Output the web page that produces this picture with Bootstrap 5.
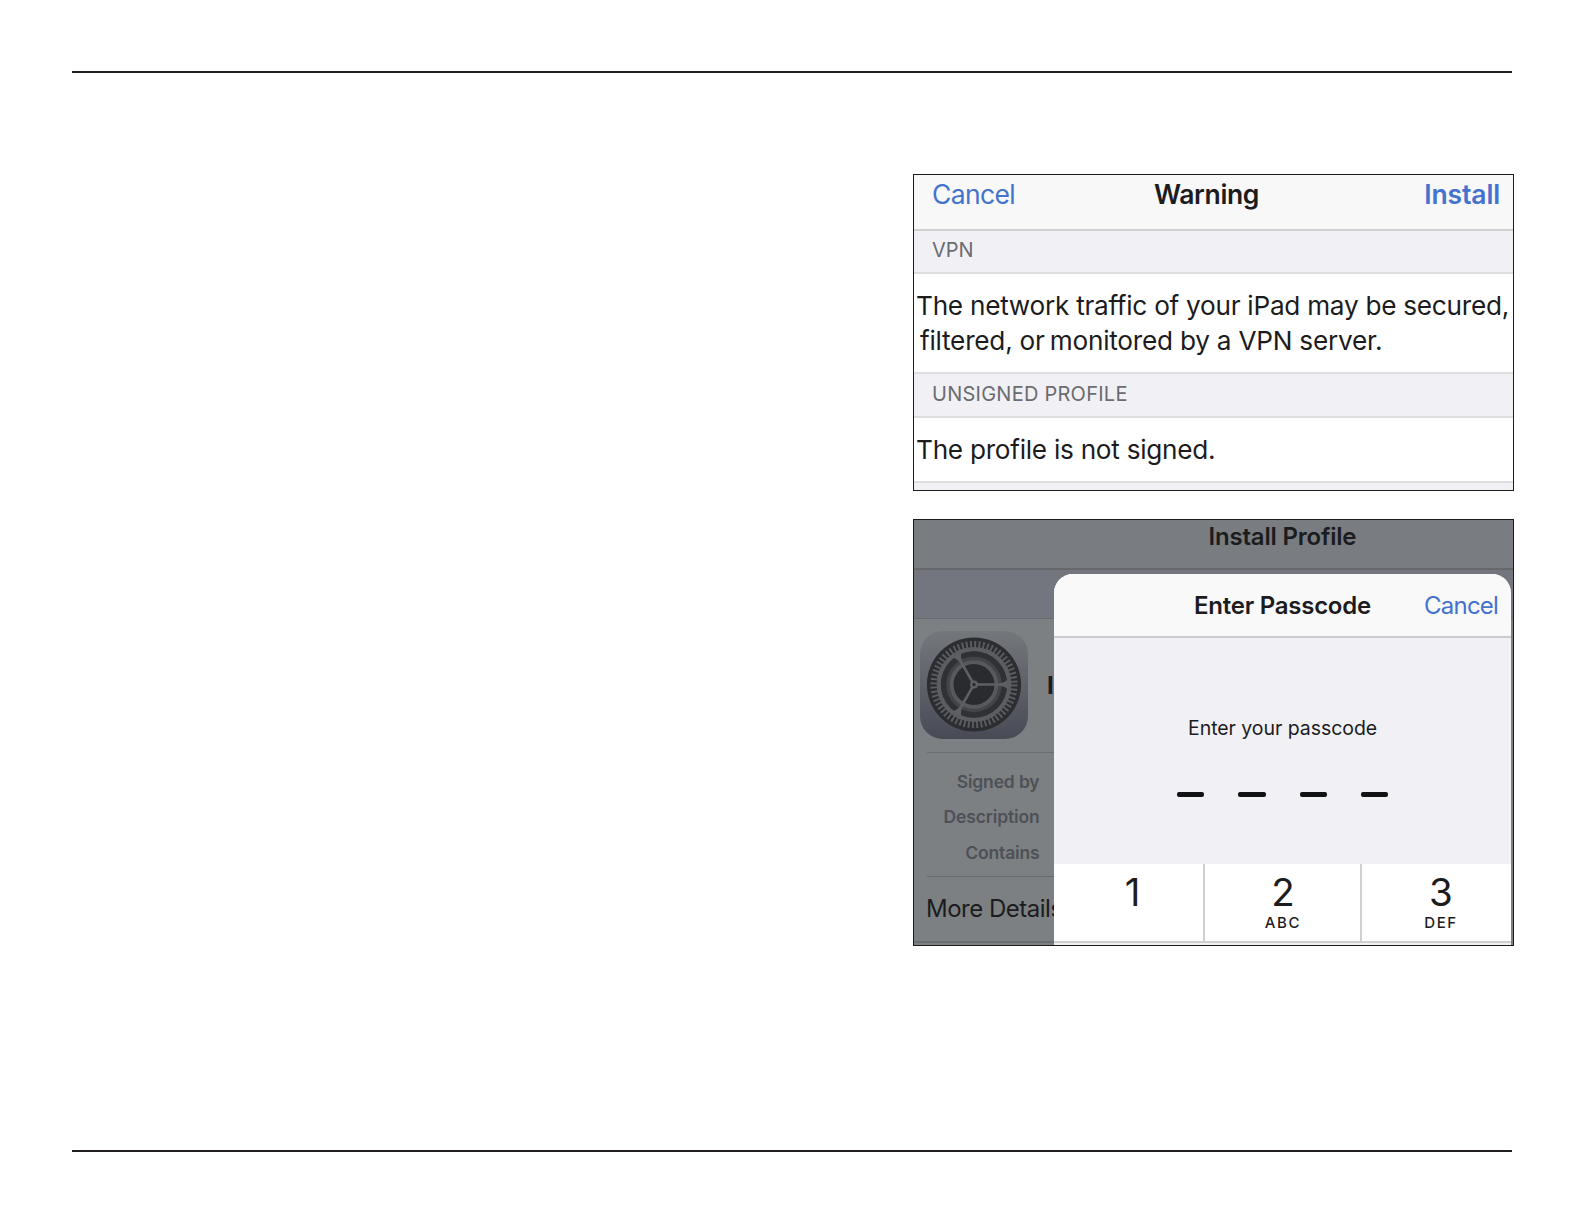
<!DOCTYPE html>
<html lang="en">
<head>
    <meta charset="UTF-8">
    <meta name="viewport" content="width=device-width, initial-scale=1.0">
    <title>Install Profile</title>

    <link href="https://cdn.jsdelivr.net/npm/bootstrap@5.3.3/dist/css/bootstrap.min.css" rel="stylesheet">
    <style>
        body {
            font-family: Inter, "Liberation Sans", sans-serif;
            color: #1c1c1e;
            background: #fff;
        }
        .page {
            width: 1584px;
            height: 1224px;
            padding: 71px 70px 72px 72px;
        }
        .rule {
            width: 1440px;
            height: 2px;
            background: #231f20;
            flex: none;
        }
        .shots {
            width: 601px;
            margin-top: 101px;
            gap: 28px;
        }
        .shot {
            border: 1px solid #1c1c1c;
            overflow: hidden;
        }
        .link-blue {
            color: #4472cd;
            text-decoration: none;
        }

        /* warning sheet */
        .warning {
            height: 317px;
            background: #f1f1f5;
        }
        .warning-bar {
            height: 56px;
            padding: 0 13px 0 18px;
            line-height: 39px;
            font-size: 26.5px;
            letter-spacing: -0.35px;
            background: #f8f8f8;
            border-bottom: 2px solid #cfcfd1;
        }
        .warning-cancel {
            width: 222px;
            letter-spacing: -0.65px;
        }
        .warning-install {
            letter-spacing: -0.15px;
        }
        .section-label {
            height: 43px;
            padding-left: 18px;
            font-size: 20px;
            line-height: 38px;
            color: #6b6b70;
            border-bottom: 2px solid #dedee1;
        }
        .unsigned-label {
            height: 44px;
            line-height: 41px;
            letter-spacing: 0.25px;
        }
        .section-text {
            padding: 14px 0 0 2px;
            font-size: 26.2px;
            line-height: 35px;
            letter-spacing: -0.27px;
            background: #fff;
            border-bottom: 2px solid #dedee1;
            white-space: nowrap;
        }
        .vpn-text {
            height: 100px;
        }
        .unsigned-text {
            height: 65px;
        }
        .hang {
            padding-left: 4px;
            letter-spacing: -0.24px;
        }
        .tight {
            word-spacing: -2px;
        }

        /* passcode sheet */
        .passcode {
            height: 427px;
            background: #7c8082;
        }
        .dim-bar {
            height: 50px;
            padding-left: 294.5px;
            font-size: 24px;
            line-height: 33px;
            letter-spacing: -0.2px;
            background: #797c80;
            border-bottom: 2px solid #66686c;
        }
        .dim-gap {
            height: 49px;
            background: #73767e;
            border-bottom: 1px solid #686b72;
        }
        .behind {
            width: 150px;
        }
        .profile-row {
            height: 133px;
            padding: 12px 0 0 6px;
        }
        .gear {
            width: 108px;
            height: 108px;
            flex: none;
        }
        .profile-name {
            padding: 37px 0 0 19px;
            font-size: 24px;
            line-height: 36px;
        }
        .facts {
            margin-left: 13px;
            width: 137px;
            height: 125px;
            padding: 11px 24.5px 0 0;
            font-size: 17.5px;
            line-height: 35.4px;
            letter-spacing: -0.15px;
            color: #4d5057;
            border-top: 1px solid #6b6e71;
            border-bottom: 1px solid #666a6d;
        }
        .more {
            height: 66px;
            padding: 12px 0 0 12px;
            font-size: 24px;
            line-height: 39px;
            letter-spacing: -0.5px;
            border-bottom: 2px solid #6c6f72;
            white-space: nowrap;
        }
        .sheet {
            position: absolute;
            left: 140px;
            top: 54px;
            width: 457px;
            height: 372px;
            background: #f1f1f5;
            border-radius: 19px 19px 0 0;
            overflow: hidden;
        }
        .sheet-bar {
            height: 64px;
            padding: 0 13px 0 140px;
            font-size: 24px;
            line-height: 64px;
            letter-spacing: -0.25px;
            background: #f9f9fa;
            border-bottom: 2px solid #ccccce;
        }
        .sheet-cancel {
            letter-spacing: -0.8px;
        }
        .prompt {
            height: 153px;
            padding: 72px 0 0 134px;
            font-size: 19.5px;
            line-height: 36px;
            letter-spacing: -0.05px;
        }
        .dashes {
            height: 73px;
            padding: 0.5px 0 0 123px;
            gap: 34px;
        }
        .dashes span {
            width: 27.3px;
            height: 5.5px;
            border-radius: 2px;
            background: #111214;
        }
        .keys {
            height: 79px;
            background: #fff;
            border-bottom: 2px solid #cfcfcf;
        }
        .key {
            border-right: 2px solid #d0d0d0;
            padding-top: 3px;
        }
        .key:last-child {
            border-right: 0;
        }
        .key-digit {
            font-size: 38.5px;
            line-height: 50px;
        }
        .key-letters {
            font-size: 15px;
            line-height: 15px;
            letter-spacing: 1.6px;
            margin-top: -2px;
            font-weight: 500;
        }
        .key-one { width: 151px; padding-left: 8px; }
        .key-two { width: 157px; padding-left: 1px; }
        .key-three { width: 149px; padding-left: 9px; }
    </style>
</head>
<body>

    <div class="page d-flex flex-column">
        <div class="rule"></div>

        <div class="shots d-flex flex-column ms-auto">

            <div class="shot warning">
                <div class="warning-bar d-flex">
                    <a href="#" class="link-blue warning-cancel">Cancel</a>
                    <span class="fw-semibold">Warning</span>
                    <a href="#" class="link-blue warning-install fw-semibold ms-auto">Install</a>
                </div>
                <div class="section-label">VPN</div>
                <div class="section-text vpn-text">
                    <div>The network traffic of your iPad may be secured,</div>
                    <div class="hang">filtered, <span class="tight">or </span>monitored by a VPN server.</div>
                </div>
                <div class="section-label unsigned-label">UNSIGNED PROFILE</div>
                <div class="section-text unsigned-text">The profile is not signed.</div>
            </div>

            <div class="shot passcode position-relative">
                <div class="dim-bar fw-semibold">Install Profile</div>
                <div class="dim-gap"></div>
                <div class="behind">
                    <div class="profile-row d-flex align-items-start">
                        <svg class="gear" viewBox="0 0 109 109">
                            <defs>
                                <linearGradient id="tile" x1="0" y1="0" x2="0" y2="1">
                                    <stop offset="0" stop-color="#74777b"/>
                                    <stop offset="1" stop-color="#484b55"/>
                                </linearGradient>
                            </defs>
                            <rect width="109" height="109" rx="23" fill="url(#tile)"/>
                            <circle cx="54.5" cy="54" r="47.5" fill="#2b2d30"/>
                            <!-- toothed ring -->
                            <circle cx="54.5" cy="54" r="40.5" fill="none" stroke="#5a5d61" stroke-width="7" stroke-dasharray="1.9 2.341"/>
                            <circle cx="54.5" cy="54" r="35.5" fill="none" stroke="#5a5d61" stroke-width="4.5"/>
                            <circle cx="54.5" cy="54" r="33.5" fill="#2f3134"/>
                            <!-- inner ring -->
                            <circle cx="54.5" cy="54" r="26" fill="none" stroke="#43454a" stroke-width="4"/>
                            <circle cx="54.5" cy="54" r="22.5" fill="none" stroke="#56595d" stroke-width="4"/>
                            <circle cx="54.5" cy="54" r="20.5" fill="#292b2e"/>
                            <!-- spokes -->
                            <g fill="#5d6064">
                                <path id="spoke" d="M54.5 52.7H80Q86 52 88.5 49V59Q86 56 80 55.3H54.5z"/>
                                <use href="#spoke" transform="rotate(120 54.5 54)"/>
                                <use href="#spoke" transform="rotate(240 54.5 54)"/>
                            </g>
                            <circle cx="54.5" cy="54" r="4" fill="#5d6064"/>
                            <circle cx="54.5" cy="54" r="1.7" fill="#292b2e"/>
                        </svg>
                        <span class="profile-name fw-bold">I</span>
                    </div>
                    <div class="facts text-end fw-semibold">
                        <div>Signed by</div>
                        <div>Description</div>
                        <div>Contains</div>
                    </div>
                    <div class="more">More Details</div>
                </div>

                <div class="sheet">
                    <div class="sheet-bar d-flex justify-content-between">
                        <span class="fw-semibold">Enter Passcode</span>
                        <a href="#" class="link-blue sheet-cancel">Cancel</a>
                    </div>
                    <div class="prompt">Enter your passcode</div>
                    <div class="dashes d-flex">
                        <span></span><span></span><span></span><span></span>
                    </div>
                    <div class="keys d-flex text-center">
                        <div class="key key-one">
                            <div class="key-digit">1</div>
                        </div>
                        <div class="key key-two">
                            <div class="key-digit">2</div>
                            <div class="key-letters">ABC</div>
                        </div>
                        <div class="key key-three">
                            <div class="key-digit">3</div>
                            <div class="key-letters">DEF</div>
                        </div>
                    </div>
                </div>
            </div>

        </div>

        <div class="rule mt-auto"></div>
    </div>

    <script src="https://cdn.jsdelivr.net/npm/bootstrap@5.3.3/dist/js/bootstrap.bundle.min.js"></script>
</body>
</html>
